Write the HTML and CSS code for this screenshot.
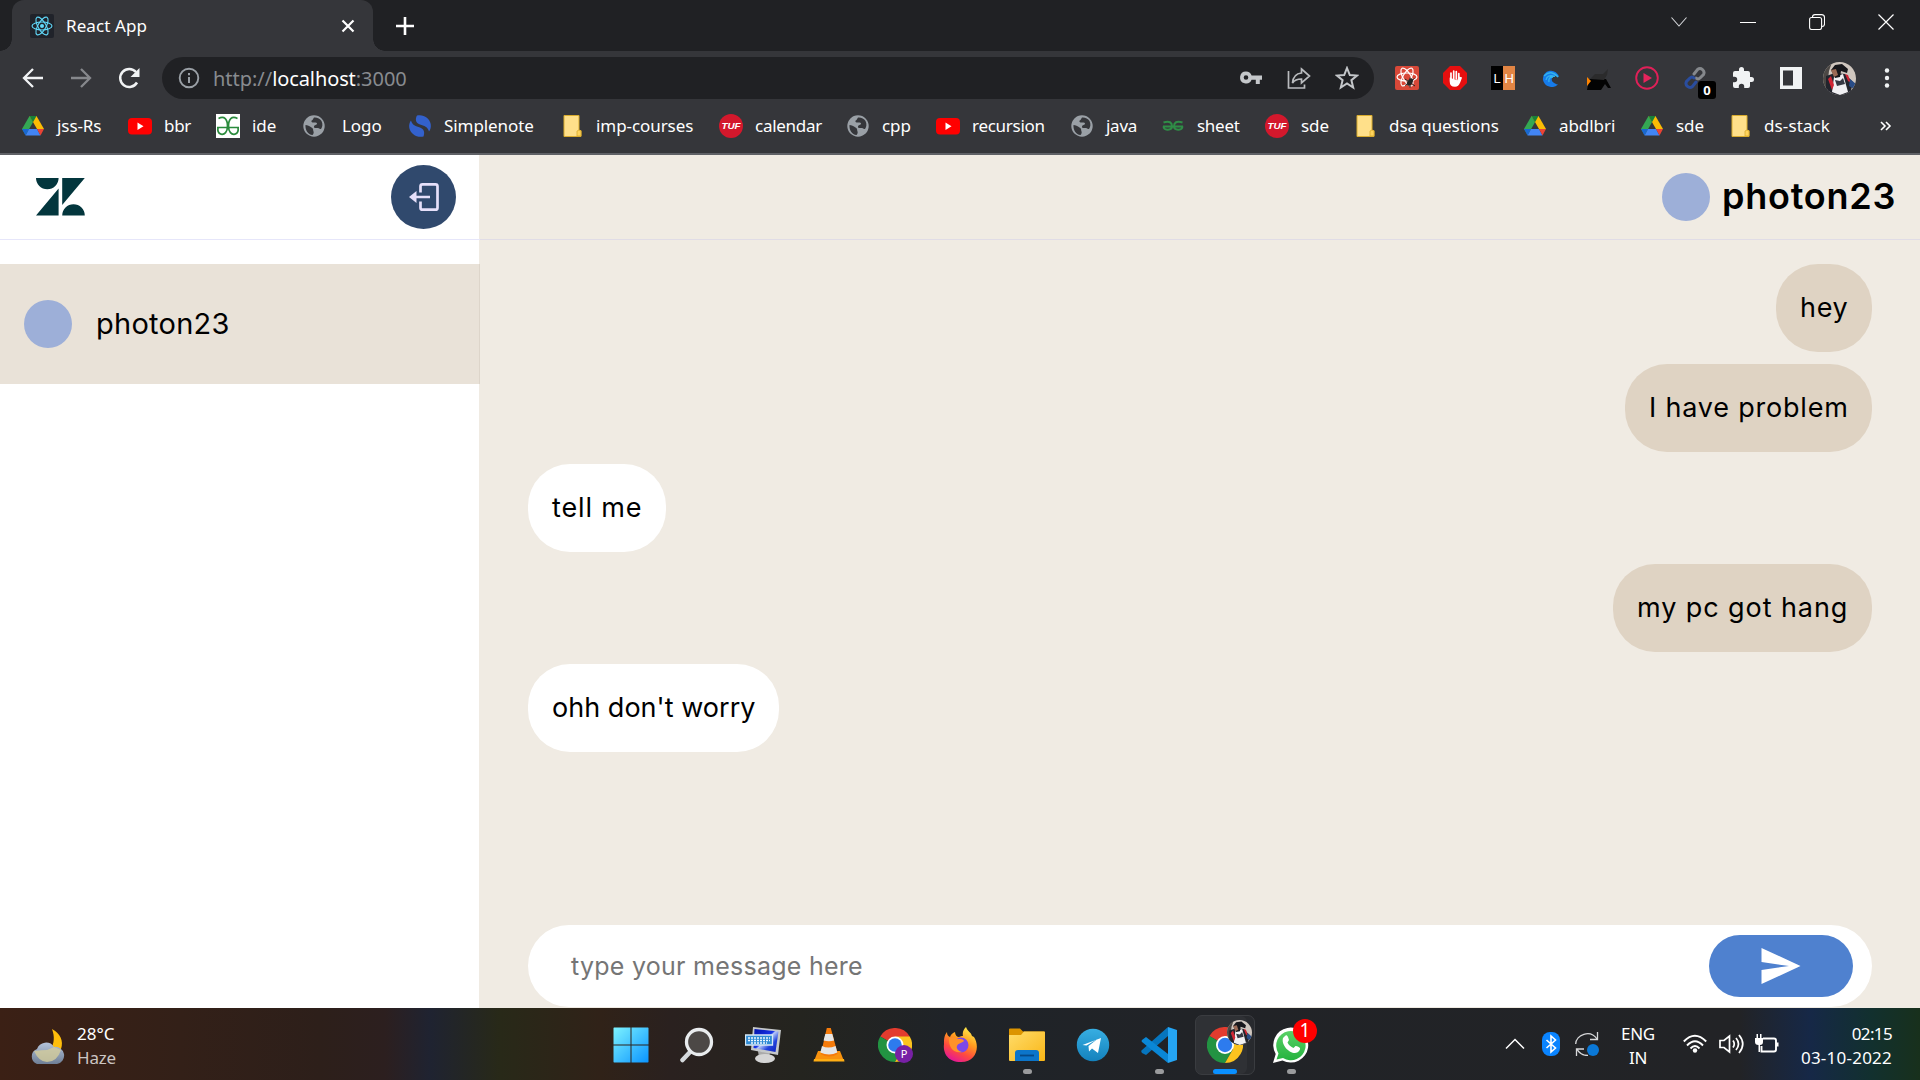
FILE: index.html
```html
<!DOCTYPE html>
<html lang="en">
<head>
<meta charset="utf-8">
<title>React App</title>
<link rel="stylesheet" href="styles.css">
</head>
<body>
<svg class="defs" width="0" height="0" aria-hidden="true">
  <defs>
    <linearGradient id="win" x1="0" y1="0" x2="1" y2="1"><stop offset="0" stop-color="#7df3ff"/><stop offset="1" stop-color="#0a94ff"/></linearGradient>
    <linearGradient id="fold" x1="0" y1="0" x2="1" y2="1"><stop offset="0" stop-color="#ffdc6a"/><stop offset="1" stop-color="#f9b616"/></linearGradient>
    <linearGradient id="tg" x1="0" y1="0" x2="0" y2="1"><stop offset="0" stop-color="#37aee2"/><stop offset="1" stop-color="#1482bd"/></linearGradient>
    <linearGradient id="fx" x1=".8" y1="0" x2=".3" y2="1"><stop offset="0" stop-color="#fff44f"/><stop offset=".4" stop-color="#ff9a1f"/><stop offset=".7" stop-color="#ff4a3f"/><stop offset="1" stop-color="#e3159b"/></linearGradient>
    <linearGradient id="scr" x1="0" y1="0" x2="1" y2="1"><stop offset="0" stop-color="#0010a8"/><stop offset=".45" stop-color="#1733e6"/><stop offset=".5" stop-color="#b9c9f8"/><stop offset=".7" stop-color="#2344dd"/><stop offset="1" stop-color="#0a1db8"/></linearGradient>
    <linearGradient id="cloud" x1="0" y1="0" x2="0" y2="1"><stop offset="0" stop-color="#b4c3da"/><stop offset="1" stop-color="#6f7f96"/></linearGradient>
    <linearGradient id="wa" x1="0" y1="0" x2="0" y2="1"><stop offset="0" stop-color="#5ad167"/><stop offset="1" stop-color="#25b33f"/></linearGradient>
    <clipPath id="round"><circle cx="16.5" cy="16.5" r="16.5"/></clipPath>
    <symbol id="drive" viewBox="0 0 24 24"><path d="M8.500 2 12 8.200 4.700 21 1 15z" fill="#34a853"/><path d="M15.500 2 23 15h-7L8.500 2z" fill="#fbbc04"/><path d="M8.500 2h7L12 8.200z" fill="#188038"/><path d="M8 15h8l3.500 6.500h-15z" fill="#4285f4"/><path d="M1 15h7l-3.500 6.500z" fill="#1967d2"/><path d="M16 15h7l-3.500 6.500z" fill="#ea4335"/></symbol>
    <symbol id="yt" viewBox="0 0 24 24"><rect y="4" width="24" height="16.500" rx="4" fill="#f00"/><path d="M9.500 8.500v7.500l6-3.750z" fill="#fff"/></symbol>
    <symbol id="globe" viewBox="0 0 24 24"><circle cx="12" cy="12" r="10.700" fill="#9aa0a6"/><path d="M3.500 11c2 0 4 1 6 2.500 2 1 1.500 2.500 2 4 .5 1 0 2.500-1 3.500C6 20.500 3 16 3.500 11zM12 3.500c3-.3 6 1 7.500 3.500 1.500 3 1 6-.5 8-1 .5-2-1-3-1h-3c-1 0-1.500-1.500-.5-2.500l2-1c1-.5.500-2-1-2h-3c-1.500-.2-1.500-2 0-2.500z" fill="#35363a"/></symbol>
    <symbol id="folder" viewBox="0 0 24 24"><path d="M4 1.500h15v15h2v6H4z" fill="#ffe08a" stroke="#d9ac2e" stroke-width="1"/><path d="M17 22v-5l2-1 2 1v5z" fill="#ffd45c" stroke="#d9ac2e" stroke-width=".8"/></symbol>
    <symbol id="tuf" viewBox="0 0 24 24"><circle cx="12" cy="12" r="12" fill="#d3182c"/><text x="12" y="15" text-anchor="middle" textLength="19" lengthAdjust="spacingAndGlyphs" font-family="Liberation Sans" font-weight="bold" font-style="italic" font-size="8.500" fill="#fff">TUF</text></symbol>
    <symbol id="gfg" viewBox="0 0 24 24"><path d="M2.500 4.500c6-3 9 1 9 7.500 0 6-3 9-6.500 8.200C2 19.500 1.500 16 2 14M1 13.500h22M21.500 4.500c-6-3-9 1-9 7.500 0 6 3 9 6.500 8.200 3-.7 3.500-4.200 3-6.200" fill="none" stroke="currentColor" stroke-width="1.700"/></symbol>
    <symbol id="chrome" viewBox="0 0 36 36"><path d="M18 18 2.400 9A18 18 0 0 1 33.600 9z" fill="#e33b2e"/><path d="M2.400 9A18 18 0 0 0 18 36L25.800 22.500 18 18z" fill="#229342"/><path d="M33.600 9A18 18 0 0 1 18 36L25.800 22.500 18 9z" fill="#fcc31e"/><circle cx="18" cy="18" r="9" fill="#fff"/><circle cx="18" cy="18" r="7.200" fill="#2d7bee"/></symbol>
    <symbol id="photo" viewBox="0 0 33 33"><g clip-path="url(#round)"><path d="M0 0h33v33H0z" fill="#cfc6be"/><path d="M0 0h9l-3 9-3 24H0z" fill="#4c4845"/><path d="m3 14 9-3 10 1 8 8-3 13H3z" fill="#22242c"/><path d="m11 15 9-3 5 18-8 3-8-3z" fill="#f1f0f3"/><path d="m5 17 3-3 3 9-2 5zM22 12l3 1 3 8-3-2z" fill="#cf2433"/><path d="m12 18 5 1 3-3 2 6-8 2z" fill="#363742"/><path d="m8 8 4-5 7-1 6 5-1 4-6-2-1 6-5 1z" fill="#17171b"/><path d="m8 8 5-1 2 6-4 2z" fill="#9b6a55"/><path d="m27 17 6 5v6l-7-4z" fill="#294c86"/></g></symbol>
  </defs>
</svg>

<header class="browser">
  <div class="tabstrip">
    <div class="tab">
      <svg class="favicon" width="24" height="24" viewBox="0 0 24 24"><rect width="24" height="24" rx="2" fill="#20232a"/><g fill="none" stroke="#61dafb" stroke-width="1.100"><ellipse cx="12" cy="12" rx="10" ry="4"/><ellipse cx="12" cy="12" rx="10" ry="4" transform="rotate(60 12 12)"/><ellipse cx="12" cy="12" rx="10" ry="4" transform="rotate(120 12 12)"/></g><circle cx="12" cy="12" r="2" fill="#61dafb"/></svg>
      <span class="tab-title">React App</span>
      <svg class="tab-close" width="14" height="14" viewBox="0 0 14 14"><path d="m1.500 1.500 11 11m0-11-11 11" stroke="#fff" stroke-width="2.200"/></svg>
    </div>
    <svg class="new-tab" width="20" height="20" viewBox="0 0 20 20"><path d="M10 1v18M1 10h18" stroke="#fff" stroke-width="2.600"/></svg>
    <div class="window-controls">
      <svg width="16" height="16" viewBox="0 0 16 16"><path d="m.5 3.500 7.500 8.500 7.500-8.500" fill="none" stroke="#d5d7da" stroke-width="1.100"/></svg>
      <svg width="16" height="16" viewBox="0 0 16 16"><path d="M0 8.500h16" stroke="#fff" stroke-width="1"/></svg>
      <svg width="16" height="16" viewBox="0 0 16 16"><path d="M3.500 3.500V3q0-2.400 2.500-2.400h6.500q3 0 3 3V10q0 2.500-2.500 2.500" fill="none" stroke="#fff" stroke-width="1.100"/><rect x=".6" y="3.500" width="12" height="12" rx="2" fill="none" stroke="#fff" stroke-width="1.100"/></svg>
      <svg width="16" height="16" viewBox="0 0 16 16"><path d="m.5.5 15 15m0-15-15 15" stroke="#fff" stroke-width="1.200"/></svg>
    </div>
  </div>

  <div class="toolbar">
    <nav class="nav-buttons">
      <svg width="24" height="24" viewBox="0 0 24 24"><path d="M22 12H3.500M12 3l-9 9 9 9" fill="none" stroke="#f1f3f4" stroke-width="2.300"/></svg>
      <svg width="24" height="24" viewBox="0 0 24 24"><path d="M2 12h18.500M12 3l9 9-9 9" fill="none" stroke="#86888c" stroke-width="2.300"/></svg>
      <svg width="24" height="24" viewBox="0 0 24 24"><path d="M20 16.500A9 9 0 1 1 19 6" fill="none" stroke="#f1f3f4" stroke-width="2.500"/><path d="M22.500 2v9h-9z" fill="#f1f3f4"/></svg>
    </nav>
    <div class="omnibox">
      <svg width="22" height="22" viewBox="0 0 22 22"><circle cx="11" cy="11" r="9.300" fill="none" stroke="#9aa0a6" stroke-width="1.900"/><path d="M11 10v6M11 6v2.200" stroke="#9aa0a6" stroke-width="2"/></svg>
      <span class="url"><span>http://</span><b>localhost</b><span>:3000</span></span>
      <div class="omnibox-actions">
        <svg width="24" height="24" viewBox="0 0 24 24"><path d="M7 5.500a6 6 0 1 0 5.600 8.300h4.200V18h4v-4.200H23V9.500H12.600A6 6 0 0 0 7 5.500zm0 3.700a2.300 2.300 0 1 1 0 4.600 2.300 2.300 0 0 1 0-4.600z" fill="#c4c7ca"/></svg>
        <svg width="24" height="24" viewBox="0 0 24 24"><path d="M1.500 5v17h16v-3.500M14.500 3l8 7-8 7v-4c-4 0-7 1-9 4 .5-6 3.500-9.500 9-10z" fill="none" stroke="#b9bbbe" stroke-width="1.700"/></svg>
        <svg width="24" height="24" viewBox="0 0 24 24"><path d="m12 2 2.800 7 7.200.5-5.600 4.700 1.800 7.300-6.200-4-6.200 4 1.800-7.300L2 9.500 9.200 9z" fill="none" stroke="#c4c7ca" stroke-width="2"/></svg>
      </div>
    </div>
    <div class="extensions">
      <svg width="24" height="24" viewBox="0 0 24 24"><rect width="24" height="24" rx="2" fill="#d94838"/><g fill="none" stroke="#fff" stroke-width="1.200"><ellipse cx="12" cy="11" rx="10" ry="4"/><ellipse cx="12" cy="11" rx="10" ry="4" transform="rotate(60 12 11)"/><ellipse cx="12" cy="11" rx="10" ry="4" transform="rotate(120 12 11)"/></g><ellipse cx="15" cy="16" rx="2.500" ry="4" fill="#242424" transform="rotate(30 15 16)"/><path d="m10 13 10 7M19.500 12.500 10 19.500m5-8v10" stroke="#242424" stroke-width="1"/></svg>
      <svg width="24" height="24" viewBox="0 0 24 24"><path d="M7 0h10l7 7v10l-7 7H7l-7-7V7z" fill="#e60f0f"/><path d="M7.500 12v3c0 3 1.500 5 4.500 5 2.500 0 3.500-1.500 4.500-4l1.500-4-1.500-.5-1.500 3M8 14V7M10.700 13V5M13.300 13V5.500M15.800 13V7.500" fill="#fff" stroke="#fff" stroke-width="1.700" stroke-linecap="round"/></svg>
      <svg width="24" height="24" viewBox="0 0 24 24"><path d="M0 0h12v24H0z" fill="#000"/><path d="M12 0h12v24H12z" fill="#e28544"/><text x="6" y="17" text-anchor="middle" font-family="Liberation Sans" font-size="13" fill="#fff">L</text><text x="18.300" y="17" text-anchor="middle" font-family="Liberation Sans" font-size="13" fill="#fff">H</text></svg>
      <svg width="18" height="18" viewBox="0 0 18 18"><path d="M1 11a8 8 0 0 1 16-2.500c-1-1.500-4-2-6-.5-2.500 2-1.500 6 5 7.500A9 9 0 0 1 1 11z" fill="#167bea"/><path d="M2 7q7-7 14 1M4 11q1-6 9-3.500M7 13q-1-5 4-5" fill="none" stroke="#33b4ec" stroke-width="1.300"/></svg>
      <svg width="24" height="24" viewBox="0 0 24 24"><path d="M2 13h17l5 9h-3l-3-4-4 6H0z" fill="#030303"/><path d="m3 13 5-5h8l5-5-1 6-3 5z" fill="#2b2b2c"/><path d="m0 11 4 4-4 5z" fill="#ff8400"/></svg>
      <svg width="24" height="24" viewBox="0 0 24 24"><circle cx="12" cy="12" r="10.800" fill="none" stroke="#e02058" stroke-width="1.900"/><path d="m8.500 7 8.500 5-8.500 5z" fill="#e6245c"/></svg>
      <span class="link-extension"><svg width="24" height="24" viewBox="0 0 24 24"><g fill="none" stroke-width="3" stroke-linecap="round"><path d="m11 8 3.500-4.500a4 4 0 0 1 6 5L17 12q-2 2-4 0" stroke="#85888c"/><path d="m13 16-3.500 4.500a4 4 0 0 1-6-5L7 12q2-2 4 0" stroke="#2a4d9e"/></g></svg><span class="count">0</span></span>
      <svg width="24" height="24" viewBox="0 0 24 24"><path d="M20.500 11H19V7a2 2 0 0 0-2-2h-4V3.500a2.500 2.500 0 0 0-5 0V5H4a2 2 0 0 0-2 2v3.800h1.500a2.700 2.700 0 0 1 0 5.400H2V20a2 2 0 0 0 2 2h3.800v-1.500a2.700 2.700 0 0 1 5.400 0V22H17a2 2 0 0 0 2-2v-4h1.500a2.500 2.500 0 0 0 0-5z" fill="#f1f3f4"/></svg>
      <svg width="24" height="24" viewBox="0 0 24 24"><path d="M1 1h22v22H1zM4 4.500v15h10v-15z" fill="#f1f3f4" fill-rule="evenodd"/></svg>
      <svg width="33" height="33"><use href="#photo"/></svg>
      <svg width="24" height="24" viewBox="0 0 24 24"><g fill="#f1f3f4"><circle cx="12" cy="4.500" r="2.200"/><circle cx="12" cy="12" r="2.200"/><circle cx="12" cy="19.500" r="2.200"/></g></svg>
    </div>
  </div>

  <nav class="bookmarks">
    <a><svg><use href="#drive"/></svg><span>jss-Rs</span></a>
    <a><svg><use href="#yt"/></svg><span class="tight">bbr</span></a>
    <a><svg class="gfg-light"><use href="#gfg"/></svg><span>ide</span></a>
    <a class="spaced"><svg><use href="#globe"/></svg><span>Logo</span></a>
    <a><svg viewBox="0 0 24 24"><path d="M3 6.500C4 11 8 12.500 12 13.500c4 1.500 5 4.500 3.500 9C9 24 2.500 20 1.300 14 .8 11 1.500 8.500 3 6.500zM21 17.500C20 13 16 11.500 12 10.500 7.500 9 7 5 9 1.500 15.500 0 21.500 4 22.700 10c.5 3-.2 5.500-1.700 7.500z" fill="#3361cc"/></svg><span>Simplenote</span></a>
    <a><svg><use href="#folder"/></svg><span>imp-courses</span></a>
    <a><svg><use href="#tuf"/></svg><span class="tight">calendar</span></a>
    <a><svg><use href="#globe"/></svg><span>cpp</span></a>
    <a><svg><use href="#yt"/></svg><span class="tight">recursion</span></a>
    <a><svg><use href="#globe"/></svg><span class="tight">java</span></a>
    <a><svg class="gfg-dark" viewBox="0 0 24 24"><path d="M2.500 8.500c6-2 8.500 0 8.500 4 0 3.500-8 5-8.500 0M2 12.500h20M21.500 8.500c-6-2-8.500 0-8.500 4 0 3.500 8 5 8.500 0" fill="none" stroke="currentColor" stroke-width="2"/></svg><span class="tight">sheet</span></a>
    <a><svg><use href="#tuf"/></svg><span>sde</span></a>
    <a><svg><use href="#folder"/></svg><span>dsa questions</span></a>
    <a><svg><use href="#drive"/></svg><span>abdlbri</span></a>
    <a><svg><use href="#drive"/></svg><span>sde</span></a>
    <a><svg><use href="#folder"/></svg><span class="loose">ds-stack</span></a>
    <svg class="overflow" viewBox="0 0 12 12"><path d="m1 2 4 4-4 4M6 2l4 4-4 4" fill="none" stroke="#fff" stroke-width="1.600"/></svg>
  </nav>
</header>

<main class="app">
  <aside class="sidebar">
    <div class="sidebar-head">
      <svg width="49" height="38" viewBox="0 0 49 38"><path d="M0 0h22.600a11.300 11.300 0 0 1-22.600 0zM22.600 10.500v27H0zM26.200 0h22.600L26.200 27zM26.200 37.500a11.300 11.300 0 0 1 22.600 0z" fill="#03363d"/></svg>
      <button class="logout" aria-label="Log out"><svg width="32" height="32" viewBox="0 0 32 32"><path d="M12.500 11.500V5.300q0-2 2-2h13q2 0 2 2v21.400q0 2-2 2h-13q-2 0-2-2v-6.200M6 16h16" fill="none" stroke="#e6e0fa" stroke-width="2.700"/><path d="M1 16 8.500 10v12z" fill="#e6e0fa"/></svg></button>
    </div>
    <div class="contact"><i class="avatar"></i><span class="contact-name">photon23</span></div>
  </aside>
  <section class="chat">
    <div class="chat-head"><i class="avatar"></i><h1>photon23</h1></div>
    <div class="messages">
      <p class="bubble mine hey">hey</p>
      <p class="bubble mine have">I have problem</p>
      <p class="bubble tell">tell me</p>
      <p class="bubble mine hang">my pc got hang</p>
      <p class="bubble worry">ohh don't worry</p>
    </div>
    <div class="composer">
      <span class="placeholder">type your message here</span>
      <button class="send" aria-label="Send"><svg width="40" height="38" viewBox="0 0 40 38"><path d="M.5 1 39.500 19 .5 37V23L28 19 .5 15z" fill="#fff"/></svg></button>
    </div>
  </section>
</main>

<footer class="taskbar">
  <div class="weather">
    <svg width="36" height="36" viewBox="0 0 36 36"><path d="M23 0c8 4 12 12 9 20H22c3-6 4-12 1-20z" fill="#ffbe0b"/><path d="M8 35a8 8 0 0 1 0-15 9.500 9.500 0 0 1 17-2 8.500 8.500 0 0 1 3 17z" fill="url(#cloud)"/><path d="M5 22q8-1 13-1l7-3 7 3q-4 12-14 12-8 0-13-11z" fill="#d5cd9c" opacity=".8"/></svg>
    <div class="weather-text"><span>28°C</span><span class="dim">Haze</span></div>
  </div>
  <div class="apps">
    <div class="app-icon"><svg width="36" height="36" viewBox="0 0 36 36"><path d="M1 .5h16.500v17H.5V1zM18.500.5H35l.5.5v16.500h-17zM.5 18.500h17v17H1l-.5-.5zM18.500 18.500h17V35l-.5.5H18.500z" fill="url(#win)"/></svg></div>
    <div class="app-icon"><svg width="36" height="36" viewBox="0 0 36 36"><path d="m12 24-8.500 9" stroke="#d5d9dc" stroke-width="4.500" stroke-linecap="round"/><circle cx="20" cy="15" r="12.500" fill="#4c4846" stroke="#e9ecee" stroke-width="3.300"/></svg></div>
    <div class="app-icon"><svg width="36" height="36" viewBox="0 0 36 36"><path d="m13 24 12 1-1 6H14z" fill="#aaa"/><ellipse cx="20" cy="31.500" rx="10" ry="4.500" fill="#d5d5d5"/><path d="m8 0 28 3-3 25-27-5z" fill="#c5c8ca"/><path d="m9.500 2 24 2.500-3 20.500-22-4z" fill="url(#scr)"/><path d="M.5 8h27v10H.5z" fill="#2f8bd4" stroke="#d6e8f5" stroke-width="1.300"/><path d="M3 11h22M3 13.500h22M6 16h16" stroke="#eef8ff" stroke-width="1.300" stroke-dasharray="2 1"/></svg></div>
    <div class="app-icon"><svg width="36" height="36" viewBox="0 0 36 36"><path d="M7 24h22l4 10H3z" fill="#f8920e"/><path d="M15.800 1h4l7 26q-9 5-17 0z" fill="#f57b0b"/><path d="m14.300 7 7 0 1.800 6.500q-5 1.500-10.500 0zM11 19q6 3 13.600 0l1.700 6.500q-8 4-17 0z" fill="#e4e6e7"/><path d="M3 32h30l.5 2.500h-31z" fill="#ffae14"/></svg></div>
    <div class="app-icon"><svg width="36" height="36" viewBox="0 0 36 36"><svg x="1" y="1" width="34" height="34"><use href="#chrome"/></svg><circle cx="27" cy="27" r="9" fill="#7720a5"/><text x="27" y="31" text-anchor="middle" font-family="Noto Sans" font-size="11" fill="#fff">P</text></svg></div>
    <div class="app-icon"><svg width="36" height="36" viewBox="0 0 36 36"><path d="M4 5c0 3 1 4 3 5 1-3 3-4 5-5 0 3 2 5 4 5 2-1 2-1 4-1-1-4 1-7 3-9 2 5 5 5 6 9l2 1c6 9 3 25-13 25C3 35 0 24 1 17c0-5 0-8 3-12z" fill="url(#fx)"/><circle cx="18" cy="18" r="7.500" fill="#7c48e8"/><path d="M6 11q6-2 9 1c3 0 5 0 6 2-2 2-6 2-7 5-1 2 1 5 5 6-8 2-14-5-13-14z" fill="#ff9229"/></svg></div>
    <div class="app-icon running"><svg width="36" height="36" viewBox="0 0 36 36"><path d="M0 2.500q0-1 1-1h10l3 3h21q1 0 1 1V12H0z" fill="#dc9400"/><path d="M0 8h12l3-3.500h20q1 0 1 1V33q0 1-1 1H1q-1 0-1-1z" fill="url(#fold)"/><path d="M6 34V26q0-3 3-3h18q3 0 3 3v8z" fill="#0c75ca"/><path d="M11 28.500h14" stroke="#064987" stroke-width="1.800"/></svg></div>
    <div class="app-icon"><svg width="36" height="36" viewBox="0 0 36 36"><circle cx="18" cy="18" r="16.200" fill="url(#tg)"/><path d="M7.500 18 26 11l-3 15-6-4.500-3 3-.5-5.500 9-7-11 6.500z" fill="#fff"/></svg></div>
    <div class="app-icon running"><svg width="36" height="36" viewBox="0 0 36 36"><path d="m27 0 9 3v30l-9 3z" fill="#25a5f4"/><path d="M27 0v9L5 28l-4-2q-1.500-2 0-3z" fill="#0675be"/><path d="m1 13 4-3 22 17v9L1 15q-1-1 0-2z" fill="#0a87d6"/></svg></div>
    <div class="app-icon current"><svg width="36" height="36"><use href="#chrome"/></svg><svg class="profile" width="25" height="25"><use href="#photo"/></svg></div>
    <div class="app-icon running"><svg width="36" height="36" viewBox="0 0 36 36"><path d="M0 36 2.700 27A17.500 17.500 0 1 1 9.500 33.500z" fill="#fff"/><path d="m3.500 32.500 2-6A14.700 14.700 0 1 1 10 31z" fill="url(#wa)"/><path d="M12 9c1-1 2-1 3 1l1 3-1.500 2.500c1 2.500 3.500 4.500 6 5.500l2-2c1-.5 4 1.500 4.500 2 .5 2-2 5-5 5C16 26 8 18 10 11z" fill="#fff"/></svg><span class="notify">1</span></div>
  </div>
  <div class="tray">
    <svg class="chevron" width="20" height="12" viewBox="0 0 20 12"><path d="m1 10.500 9-9 9 9" fill="none" stroke="#fff" stroke-width="1.500"/></svg>
    <svg class="bluetooth" width="18" height="24" viewBox="0 0 18 24"><rect width="18" height="24" rx="8" fill="#0a84ff"/><path d="m4.500 8 9 8L9 20V4l4.500 4-9 8" fill="none" stroke="#fff" stroke-width="1.600"/></svg>
    <svg class="sync" width="24" height="24" viewBox="0 0 24 24"><path d="M.7 12C1 3 15-3 22 7M22.500 0v7.500H15M13 23.500Q5 23.500 2 17M1.500 24v-7H9" fill="none" stroke="#d7d8da" stroke-width="1.300"/><circle cx="18" cy="18" r="6" fill="#0a78d7"/></svg>
    <div class="language"><span>ENG</span><span>IN</span></div>
    <svg class="wifi" width="24" height="20" viewBox="0 0 24 20"><path d="M.8 7.500q11-11.500 22.400 0M4 11.500q8-8.500 16 0M7.500 14.500q4.500-5 9 0" fill="none" stroke="#fff" stroke-width="1.900"/><circle cx="12" cy="16.500" r="2.200" fill="#fff"/></svg>
    <svg class="volume" width="25" height="20" viewBox="0 0 25 20"><path d="M1 6.500h4L10.500 2v16L5 13.500H1zM14 6.500q2.500 3.500 0 7M17 4q5 6 0 12M20 1q7.500 9 0 18" fill="none" stroke="#fff" stroke-width="1.700"/></svg>
    <svg class="battery" width="24" height="20" viewBox="0 0 24 20"><path d="M8 4.500h11q2 0 2 2v9q0 2-2 2H6.500V12" fill="none" stroke="#fff" stroke-width="1.900"/><path d="M21 8.500h2.500v4H21zM0 4h8v4q0 3-3 3v7H3.500v-7Q0 11 0 8zM1.500 0h1.500v4H1.500zM5 0h1.500v4H5z" fill="#fff"/></svg>
    <div class="clock"><span class="time">02:15</span><span class="date">03-10-2022</span></div>
  </div>
</footer>
</body>
</html>
```
FILE: styles.css
```css
* { box-sizing: border-box; }
body { margin: 0; width: 1920px; height: 1080px; overflow: hidden; display: flex; flex-direction: column; font-family: "Noto Sans", sans-serif; background: #f0ebe3; }
svg { display: block; flex: none; }
button { border: 0; padding: 0; display: flex; align-items: center; justify-content: center; }
.defs { width: 0; height: 0; position: absolute; }

/* Browser chrome */
.browser { height: 155px; flex: none; background: #35363a; border-bottom: 2px solid #5f6166; color: #fff; }
.tabstrip { height: 51px; background: #202124; display: flex; padding-left: 12px; }
.tab { position: relative; width: 361px; background: #35363a; border-radius: 12px 12px 0 0; display: flex; align-items: center; padding: 0 18px; }
.tab::before, .tab::after { content: ""; position: absolute; bottom: 0; width: 12px; height: 12px; }
.tab::before { left: -12px; background: radial-gradient(circle at 0 0, #202124 11.500px, #35363a 12px); }
.tab::after { right: -12px; background: radial-gradient(circle at 100% 0, #202124 11.500px, #35363a 12px); }
.tab-title { margin-left: 12px; font-size: 17px; letter-spacing: .09px; }
.tab-close { margin-left: auto; }
.new-tab { margin: 16px 0 0 22px; }
.window-controls { margin-left: auto; height: 43px; display: grid; grid-template-columns: repeat(4, 69px); align-items: center; justify-items: center; }
.toolbar { height: 54px; display: flex; align-items: center; padding-right: 9px; }
.nav-buttons { width: 162px; padding-left: 21px; display: flex; gap: 24px; }
.omnibox { width: 1212px; height: 42px; border-radius: 21px; background: #202124; display: flex; align-items: center; padding: 0 15px 0 16px; }
.url { margin-left: 13px; font-size: 20px; letter-spacing: -.03px; color: #888b8f; display: flex; }
.url b { color: #fff; font-weight: 400; letter-spacing: -.1px; }
.omnibox-actions { margin-left: auto; display: flex; gap: 24px; }
.extensions { margin-left: auto; display: grid; grid-template-columns: repeat(11, 48px); align-items: center; justify-items: center; }
.link-extension { position: relative; }
.count { position: absolute; left: 15px; top: 15px; width: 18px; height: 18px; border-radius: 3px; background: #000; font-size: 13px; line-height: 18px; font-weight: 700; text-align: center; }
.bookmarks { height: 42px; padding-left: 21px; display: grid; grid-template-columns: 107px 88px 86px 106px 152px 159px 127px 90px 134px 91px 104px 88px 170px 117px 88px 152px 12px; align-items: center; font-size: 17px; letter-spacing: -.07px; white-space: nowrap; }
.bookmarks a { display: flex; align-items: center; gap: 12px; }
.bookmarks span { margin-top: -2px; }
.bookmarks .tight { letter-spacing: -.27px; }
.bookmarks .loose { letter-spacing: .11px; }
.bookmarks .spaced { gap: 16px; }
.bookmarks svg { width: 24px; height: 24px; }
.bookmarks .overflow { width: 12px; height: 12px; }
.gfg-light { background: #fff; color: #2a8a3c; }
.gfg-dark { color: #2f8d46; }

/* Chat application */
.app { height: 853px; flex: none; display: flex; color: #000; font-family: Inter, sans-serif; }
.sidebar { width: 480px; background: linear-gradient(90deg, #fff 479px, #f0ebe3 479px); }
.sidebar-head { height: 85px; border-bottom: 1px solid #e6e6fa; display: flex; align-items: center; justify-content: space-between; padding: 0 24px 0 36px; }
.logout { width: 65px; height: 64px; border-radius: 50%; background: #30496d; }
.contact { height: 120px; margin-top: 24px; background: #e9e2d8; border-right: 1px solid #ddd5ca; display: flex; align-items: center; padding-left: 24px; gap: 24px; }
.avatar { width: 48px; height: 48px; border-radius: 50%; background: #9dafd8; }
.contact-name { font-size: 29px; letter-spacing: .25px; padding-bottom: 2px; }
.chat { width: 1440px; background: #f0ebe3; display: flex; flex-direction: column; }
.chat-head { height: 85px; flex: none; border-bottom: 1px solid #e0dce6; display: flex; align-items: center; justify-content: flex-end; gap: 12px; padding-right: 24px; }
.chat-head h1 { margin: 0; width: 174px; font-size: 36px; font-weight: 600; letter-spacing: .75px; padding-bottom: 2px; }
.messages { flex: 1; padding: 24px 48px 0; display: flex; flex-direction: column; align-items: flex-start; gap: 12px; }
.bubble { margin: 0; height: 88px; border-radius: 42px; background: #fff; display: flex; align-items: center; padding: 0 20px 2px 24px; font-size: 27px; white-space: nowrap; }
.mine { align-self: flex-end; background: #dfd3c3; }
.hey { width: 96px; letter-spacing: .7px; }
.have { width: 247px; letter-spacing: .8px; }
.tell { width: 138px; letter-spacing: .85px; }
.hang { width: 259px; letter-spacing: .92px; }
.worry { width: 251px; letter-spacing: .03px; }
.composer { height: 82px; flex: none; margin: 0 48px 1px; border-radius: 41px; background: #fff; display: flex; align-items: center; justify-content: space-between; padding: 0 19px 0 43px; }
.placeholder { font-size: 25px; letter-spacing: .26px; color: #757575; }
.send { width: 144px; height: 62px; border-radius: 31px; background: #4f81cf; }

/* Taskbar */
.taskbar { position: relative; height: 72px; flex: none; display: flex; align-items: center; color: #fff; font-size: 17px; background: linear-gradient(90deg, #3b2015 0, #332018 180px, #2d1f1a 320px, #2c1f1f 385px, #1f2331 430px, #282918 500px, #302218 600px, #2a211f 670px, #24241f 800px, #1f2328 950px, #212327 1200px, #222326 1740px, #162847 1810px, #12302f 1870px, #18301c 1920px); }
.weather { width: 598px; display: flex; align-items: center; gap: 12px; padding: 5px 0 0 29px; }
.weather-text, .language, .clock { display: flex; flex-direction: column; line-height: 24px; margin-top: 3px; }
.weather-text { margin-top: -2px; }
.dim { color: #cbc5c2; letter-spacing: -.18px; }
.apps { display: grid; grid-template-columns: repeat(11, 66px); padding-top: 2px; }
.app-icon { position: relative; height: 60px; margin: 0 3px; display: flex; align-items: center; justify-content: center; }
.running::after, .current::after { content: ""; position: absolute; bottom: 1px; left: calc(50% - 4.500px); width: 9px; height: 5px; border-radius: 3px; background: #9a9b9d; }
.current { background: #2f3135; border: 1px solid #3a3c40; border-radius: 7px; box-shadow: inset -7px 0 0 #282a2e; }
.current::after { left: calc(50% - 12px); bottom: 0; width: 24px; background: #0a90ff; }
.profile { position: absolute; left: 31px; top: 4px; }
.notify { position: absolute; left: 32px; top: 4px; width: 24px; height: 24px; border-radius: 50%; background: #f00; font-size: 19px; line-height: 23px; text-align: center; }
.tray { margin-left: auto; padding-right: 28px; display: flex; align-items: center; }
.bluetooth { margin-left: 17px; }
.sync { margin-left: 15px; }
.language { width: 40px; margin-left: 19px; align-items: center; letter-spacing: -.3px; }
.wifi { margin-left: 25px; }
.volume { margin-left: 12px; }
.battery { margin-left: 11px; }
.clock { width: 113px; align-items: flex-end; }
.time { letter-spacing: -.65px; }
.date { letter-spacing: .23px; }
```
